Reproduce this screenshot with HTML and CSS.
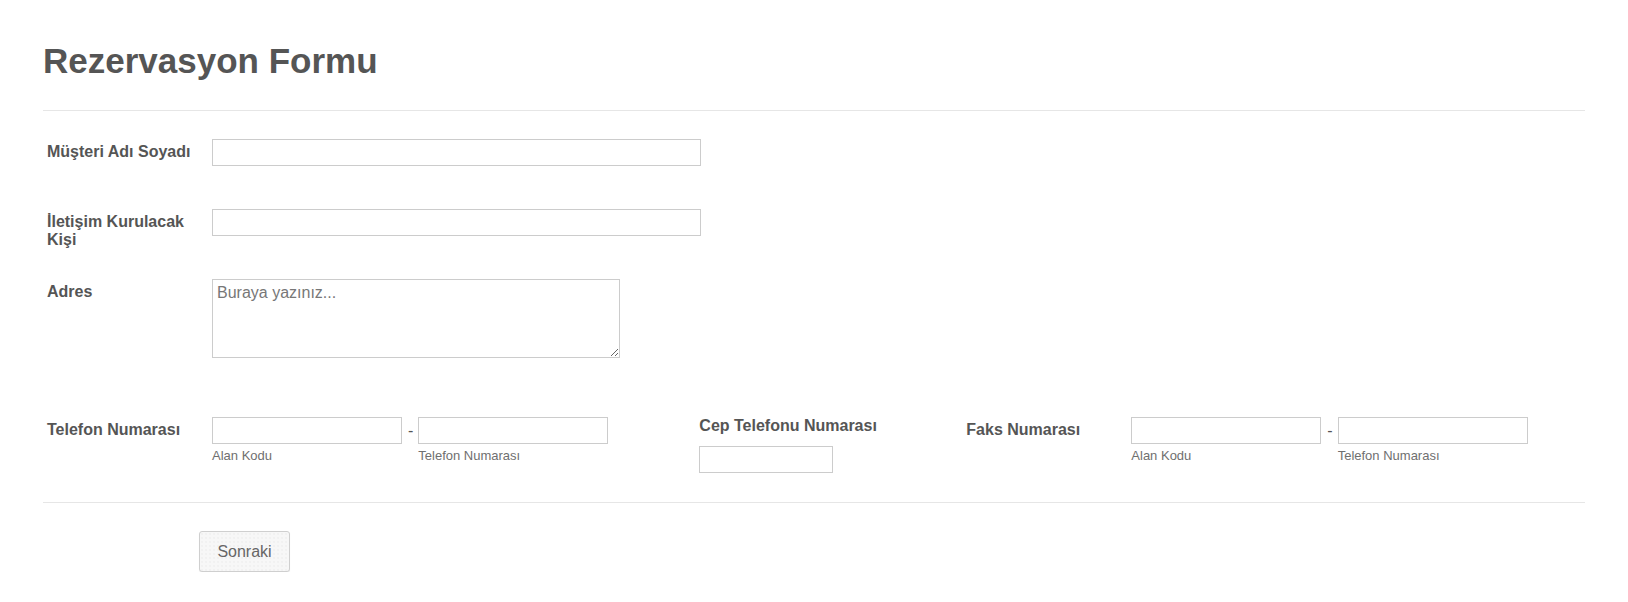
FILE: index.html
```html
<!DOCTYPE html>
<html lang="tr">
<head>
  <meta charset="UTF-8" />
  <meta name="viewport" content="width=device-width, initial-scale=1.0" />
  <title>Rezervasyon Formu</title>
  <link rel="stylesheet" href="styles.css">
</head>
<body>
  <form class="form" onsubmit="return false">
    <div class="form-header">
      <h1>Rezervasyon Formu</h1>
    </div>

    <ul class="fields">
      <li class="row row-name">
        <label class="label" for="musteri">Müşteri Adı Soyadı</label>
        <input type="text" id="musteri" class="text-input wide" />
      </li>

      <li class="row row-contact">
        <label class="label" for="kisi">İletişim Kurulacak Kişi</label>
        <input type="text" id="kisi" class="text-input wide" />
      </li>

      <li class="row row-address">
        <label class="label" for="adres">Adres</label>
        <textarea id="adres" class="textarea" placeholder="Buraya yazınız..."></textarea>
      </li>

      <li class="row row-phones">
        <div class="field">
          <label class="label">Telefon Numarası</label>
          <div class="phone">
            <div class="part">
              <input type="tel" class="text-input phone-input" />
              <span class="sublabel">Alan Kodu</span>
            </div>
            <span class="dash">-</span>
            <div class="part">
              <input type="tel" class="text-input phone-input" />
              <span class="sublabel">Telefon Numarası</span>
            </div>
          </div>
        </div>

        <div class="field field-top">
          <label class="label label-top" for="cep">Cep Telefonu Numarası</label>
          <input type="tel" id="cep" class="text-input small" />
        </div>

        <div class="field">
          <label class="label">Faks Numarası</label>
          <div class="phone">
            <div class="part">
              <input type="tel" class="text-input phone-input" />
              <span class="sublabel">Alan Kodu</span>
            </div>
            <span class="dash">-</span>
            <div class="part">
              <input type="tel" class="text-input phone-input" />
              <span class="sublabel">Telefon Numarası</span>
            </div>
          </div>
        </div>
      </li>
    </ul>

    <div class="form-footer">
      <button type="button" class="next-btn">Sonraki</button>
    </div>
  </form>
</body>
</html>
```

FILE: styles.css
```css
body {
  margin: 0;
  background: #fff;
  color: #555;
  font-family: "Liberation Sans", Arial, sans-serif;
}
.form {
  padding: 40px 43px 0;
}
.form-header {
  padding-bottom: 28px;
  border-bottom: 1px solid #e6e6e6;
}
.form-header h1 {
  margin: 0;
  font-size: 35px;
  line-height: 42px;
  font-weight: bold;
  color: #555;
}
.fields {
  list-style: none;
  margin: 0;
  padding: 28px 0 29px;
}
.row {
  display: flex;
  align-items: flex-start;
  padding-left: 4px;
}
.row-name {
  margin-bottom: 43px;
}
.row-contact {
  margin-bottom: 30px;
}
.row-address {
  margin-bottom: 59px;
}
.label {
  width: 150px;
  margin-right: 15px;
  padding-top: 4px;
  font-size: 16px;
  font-weight: bold;
  color: #555;
  flex-shrink: 0;
}
.text-input {
  box-sizing: border-box;
  height: 27px;
  border: 1px solid #ccc;
  padding: 0 4px;
  font-family: inherit;
  font-size: 16px;
  color: #555;
  background: #fff;
  margin: 0;
}
.wide {
  width: 489px;
}
.textarea {
  box-sizing: border-box;
  width: 408px;
  height: 79px;
  margin: 0;
  padding: 4px;
  border: 1px solid #ccc;
  font-family: inherit;
  font-size: 16px;
  color: #555;
}
.textarea::placeholder {
  color: #777;
}
.field {
  display: flex;
  align-items: flex-start;
}
.phone {
  display: flex;
  align-items: flex-start;
}
.part {
  display: flex;
  flex-direction: column;
}
.phone-input {
  width: 190px;
}
.dash {
  padding: 0 5px 0 6px;
  line-height: 27px;
  font-size: 16px;
  color: #555;
}
.sublabel {
  margin-top: 4px;
  font-size: 13px;
  color: #6f6f6f;
}
.field-top {
  flex-direction: column;
  width: 267px;
  margin-left: 91px;
}
.label-top {
  width: auto;
  margin: 0 0 11px;
  padding: 0;
}
.small {
  width: 134px;
}
.form-footer {
  border-top: 1px solid #e6e6e6;
  padding: 28px 0 0 156px;
}
.next-btn {
  width: 91px;
  height: 41px;
  padding: 0;
  border: 1px solid #cfcfcf;
  border-radius: 3px;
  background-color: #f7f7f7;
  background-image: radial-gradient(#e9e9e9 0.6px, transparent 0.8px);
  background-size: 4px 4px;
  box-shadow: 0 1px 1px rgba(0, 0, 0, 0.07);
  font-family: inherit;
  font-size: 16px;
  color: #666;
  cursor: pointer;
}
```
